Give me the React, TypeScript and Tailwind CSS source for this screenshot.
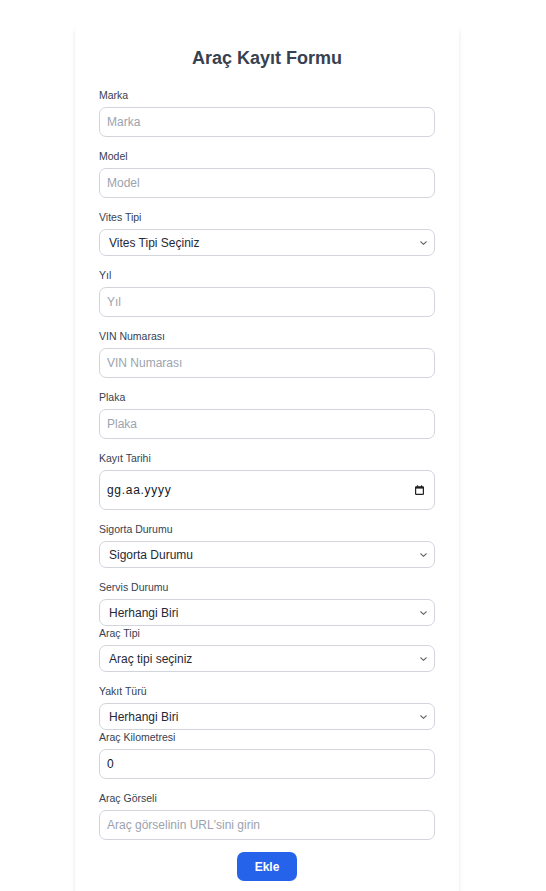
import React from "react";

const labelCls = "block text-[10.5px] leading-[15px] mb-1 text-[#374151]";
const inputCls =
  "block w-full h-[30px] px-[7px] rounded-[7px] border border-[#d1d5db] bg-white text-[12px] text-[#111827] placeholder:text-[#9ca3af] outline-none";
const selectCls =
  "block w-full h-[27px] pl-[9px] pr-[20px] appearance-none rounded-[7px] border border-[#d1d5db] bg-white text-[12px] text-[#1f2937] outline-none";

function Field({ label, children, mb = true }: { label: string; children: React.ReactNode; mb?: boolean }) {
  return (
    <div className={mb ? "mb-3" : ""}>
      <label className={labelCls}>{label}</label>
      {children}
    </div>
  );
}

function Select({ options }: { options: string[] }) {
  return (
    <div className="relative">
      <select className={selectCls} defaultValue={options[0]}>
        {options.map((o) => (
          <option key={o} value={o}>
            {o}
          </option>
        ))}
      </select>
      <svg
        className="pointer-events-none absolute right-[8px] top-[12px]"
        width="7"
        height="4"
        viewBox="0 0 7 4"
        fill="none"
      >
        <path d="M0.5 0.5 L3.5 3.3 L6.5 0.5" stroke="#666" strokeWidth="1.1" />
      </svg>
    </div>
  );
}

export default function App() {
  return (
    <div className="min-h-screen bg-white font-['Liberation_Sans',Arial,sans-serif]">
      <div className="ml-[75px] mt-[22px] w-[384px] rounded-lg bg-white shadow-md px-6 pt-[22px] pb-6">
        <h1 className="text-[18px] leading-[28px] font-bold text-center text-[#374151] mb-4">Araç Kayıt Formu</h1>
        <Field label="Marka">
          <input className={inputCls} placeholder="Marka" />
        </Field>
        <Field label="Model">
          <input className={inputCls} placeholder="Model" />
        </Field>
        <Field label="Vites Tipi">
          <Select options={["Vites Tipi Seçiniz", "Manuel", "Otomatik"]} />
        </Field>
        <Field label="Yıl">
          <input className={inputCls} placeholder="Yıl" />
        </Field>
        <Field label="VIN Numarası">
          <input className={inputCls} placeholder="VIN Numarası" />
        </Field>
        <Field label="Plaka">
          <input className={inputCls} placeholder="Plaka" />
        </Field>
        <Field label="Kayıt Tarihi">
          <div className="flex items-center justify-between w-full h-[40px] pl-[7px] pr-[10px] rounded-[7px] border border-[#d1d5db] bg-white">
            <span className="text-[12px] tracking-[0.7px] text-[#111827]">gg.aa.yyyy</span>
            <svg width="9" height="10" viewBox="0 0 9 10" fill="none">
              <rect x="0.6" y="1.8" width="7.8" height="7.6" rx="0.6" stroke="#222" strokeWidth="1.2" />
              <rect x="0.6" y="1.8" width="7.8" height="1.8" fill="#222" />
              <rect x="1.9" y="0.3" width="1.2" height="1.8" fill="#222" />
              <rect x="5.9" y="0.3" width="1.2" height="1.8" fill="#222" />
            </svg>
          </div>
        </Field>
        <Field label="Sigorta Durumu">
          <Select options={["Sigorta Durumu", "Var", "Yok"]} />
        </Field>
        <Field label="Servis Durumu" mb={false}>
          <Select options={["Herhangi Biri"]} />
        </Field>
        <Field label="Araç Tipi">
          <Select options={["Araç tipi seçiniz"]} />
        </Field>
        <Field label="Yakıt Türü" mb={false}>
          <Select options={["Herhangi Biri"]} />
        </Field>
        <Field label="Araç Kilometresi">
          <input className={inputCls} defaultValue="0" />
        </Field>
        <Field label="Araç Görseli">
          <input className={inputCls} placeholder="Araç görselinin URL'sini girin" />
        </Field>
        <div className="flex justify-center">
          <button className="w-[60px] h-[29px] rounded-[7px] bg-[#2563eb] text-white text-[12px] font-bold">Ekle</button>
        </div>
      </div>
    </div>
  );
}
